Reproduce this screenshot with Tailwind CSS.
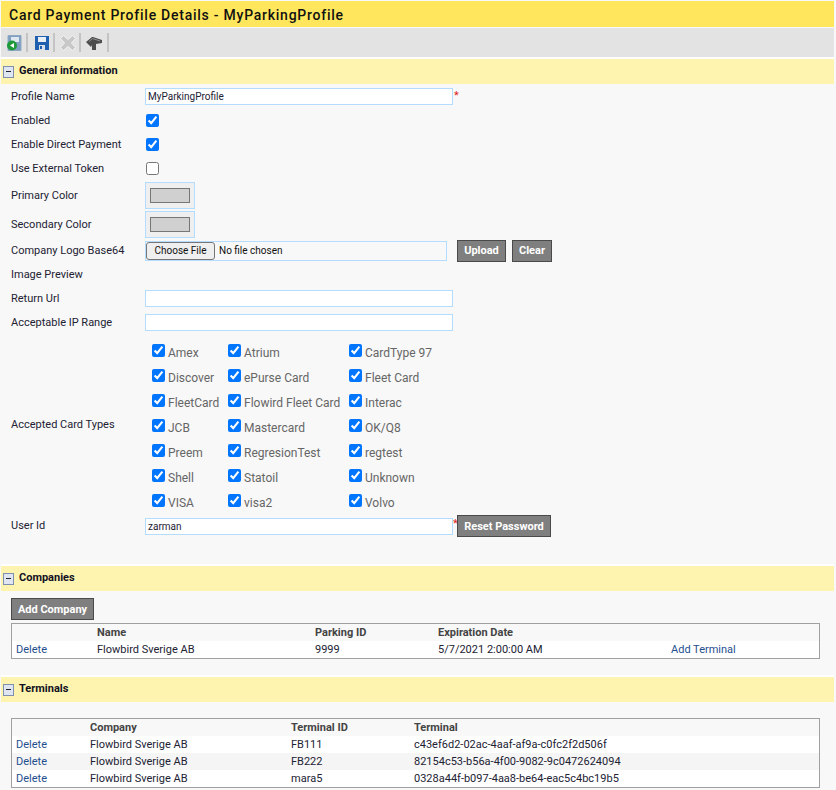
<!DOCTYPE html>
<html lang="en">
<head>
  <meta charset="UTF-8">
  <title>Card Payment Profile Details</title>
  <script src="https://cdn.jsdelivr.net/npm/@tailwindcss/browser@4"></script>
</head>
<body class="w-[836px] h-[790px] overflow-hidden bg-[#f8f8f8] font-['Roboto',sans-serif] text-[11px] text-[#222233]">
  <!-- Title -->
  <div class="ml-px mr-[2px] mt-px h-[26px] flex items-center pl-2 pt-0.5 bg-[#ffe65c] text-[14px] font-medium tracking-[0.75px] text-[#111]">Card Payment Profile Details - MyParkingProfile</div>

  <!-- Toolbar -->
  <div class="ml-px mr-[2px] mt-px h-[29px] flex items-center pl-[5px] bg-[#e3e3e3]">
    <svg class="w-4 h-4" viewBox="0 0 16 16"><path d="M2 0.500h13v15H2z" fill="#7f9fc0" stroke="#8fa8c4"/><path d="M5 2h8v5H5z" fill="#dfe8f0"/><circle cx="6" cy="10.500" r="5" fill="#1f9a3a"/><path d="M8 8v5L4 10.500z" fill="#fff"/></svg>
    <div class="ml-1 mr-[6px] w-0.5 h-[19px] bg-[#c4c4c4]"></div>
    <svg class="w-4 h-4" viewBox="0 0 16 16"><path d="M1 1h14v14H1z" fill="#1f5fb0"/><path d="M4 2h8v5H4z" fill="#e8eef5"/><path d="M5 10h6v5H5z" fill="#d8e0ea"/><path d="M6 11h2v3H6z" fill="#1f5fb0"/></svg>
    <div class="ml-[3px] mr-[5px] w-0.5 h-[19px] bg-[#c4c4c4]"></div>
    <svg class="w-4 h-4" viewBox="0 0 16 16"><path d="M0.500 3.500 3.500 0.500 8 4.500l4.500-4 3 3L11.500 8l4 4.500-3 3L8 11.500l-4.500 4-3-3L4.500 8z" fill="#c8c8c8" stroke="#f2f2f2"/></svg>
    <div class="ml-[3px] mr-[5px] w-0.5 h-[19px] bg-[#c4c4c4]"></div>
    <svg class="w-4 h-4" viewBox="0 0 16 16"><path d="M0 7 6 2l1 0 9 3v3l-6 1v6H6V10L5 12z" fill="#4d4d4d"/><path d="M3 6.500 6.500 3.500 14 6" fill="none" stroke="#8f8f8f"/></svg>
    <div class="ml-[5px] w-0.5 h-[19px] bg-[#c4c4c4]"></div>
  </div>

  <!-- General information -->
  <div class="ml-px mr-[2px] border-t-2 border-white h-[27px] flex items-center bg-[#fff3b0] font-bold text-[#111122]">
    <span class="ml-[2px] mr-[5px] w-[11px] h-3 flex items-center justify-center border border-[#7f8fb0] bg-[#dfe6f2]"><span class="w-[5px] h-px bg-[#223]"></span></span>
    General information
  </div>

  <div class="pl-[11px]">
    <div class="h-6 flex items-center">
      <label class="w-[134px] pt-0.5">Profile Name</label>
      <input class="w-[308px] h-[17px] px-0.5 border border-[#b3dcff] bg-white text-[10px]" value="MyParkingProfile">
      <span class="ml-px self-start mt-[4px] text-[#e02020]">*</span>
    </div>
    <div class="h-6 flex items-center">
      <label class="w-[134px] pt-0.5">Enabled</label>
      <input type="checkbox" checked class="ml-px w-[13px] h-[13px]">
    </div>
    <div class="h-6 flex items-center">
      <label class="w-[134px] pt-0.5">Enable Direct Payment</label>
      <input type="checkbox" checked class="ml-px w-[13px] h-[13px]">
    </div>
    <div class="h-6 flex items-center">
      <label class="w-[134px] pt-0.5">Use External Token</label>
      <input type="checkbox" class="ml-px w-[13px] h-[13px]">
    </div>
    <div class="mt-px h-[29px] flex items-center">
      <label class="w-[134px] pt-0.5">Primary Color</label>
      <div class="w-[50px] h-[27px] flex items-center justify-center border border-[#b3dcff] bg-[#efefef]"><div class="w-10 h-[15px] border border-[#767676] bg-[#d0d0d0]"></div></div>
    </div>
    <div class="h-[29px] flex items-center">
      <label class="w-[134px] pt-0.5">Secondary Color</label>
      <div class="w-[50px] h-[27px] flex items-center justify-center border border-[#b3dcff] bg-[#efefef]"><div class="w-10 h-[15px] border border-[#767676] bg-[#d0d0d0]"></div></div>
    </div>
    <div class="h-[23px] flex items-center">
      <label class="w-[134px] pt-0.5">Company Logo Base64</label>
      <div class="w-[302px] h-5 flex items-center border border-[#b3dcff] text-[10px]">
        <button class="w-[69px] h-[18px] rounded-[3px] border border-[#767676] bg-[#efefef] text-[#111]">Choose File</button>
        <span class="ml-1 text-[#111]">No file chosen</span>
      </div>
      <button class="ml-[10px] w-[49px] h-[22px] pt-0.5 border border-[#4a4a4a] bg-[#7f7f7f] font-bold text-white">Upload</button>
      <button class="ml-1.5 w-10 h-[22px] pt-0.5 border border-[#4a4a4a] bg-[#7f7f7f] font-bold text-white">Clear</button>
    </div>
    <div class="h-6 flex items-center">
      <label class="w-[134px] pt-0.5">Image Preview</label>
    </div>
    <div class="h-6 flex items-center">
      <label class="w-[134px] pt-0.5">Return Url</label>
      <input class="w-[308px] h-[17px] border border-[#b3dcff] bg-white">
    </div>
    <div class="h-6 flex items-center">
      <label class="w-[134px] pt-0.5">Acceptable IP Range</label>
      <input class="w-[308px] h-[17px] border border-[#b3dcff] bg-white">
    </div>
    <div class="mt-1.5 h-[175px] flex">
      <label class="w-[134px] pt-[77px]">Accepted Card Types</label>
      <div class="ml-[7px] grid grid-cols-[76px_121px_100px] auto-rows-[25px] items-center text-[12px] text-[#666]">
        <label class="flex items-center gap-[3px]"><input type="checkbox" checked class="w-[13px] h-[13px] mb-[5px]">Amex</label>
        <label class="flex items-center gap-[3px]"><input type="checkbox" checked class="w-[13px] h-[13px] mb-[5px]">Atrium</label>
        <label class="flex items-center gap-[3px]"><input type="checkbox" checked class="w-[13px] h-[13px] mb-[5px]">CardType 97</label>
        <label class="flex items-center gap-[3px]"><input type="checkbox" checked class="w-[13px] h-[13px] mb-[5px]">Discover</label>
        <label class="flex items-center gap-[3px]"><input type="checkbox" checked class="w-[13px] h-[13px] mb-[5px]">ePurse Card</label>
        <label class="flex items-center gap-[3px]"><input type="checkbox" checked class="w-[13px] h-[13px] mb-[5px]">Fleet Card</label>
        <label class="flex items-center gap-[3px]"><input type="checkbox" checked class="w-[13px] h-[13px] mb-[5px]">FleetCard</label>
        <label class="flex items-center gap-[3px]"><input type="checkbox" checked class="w-[13px] h-[13px] mb-[5px]">Flowird Fleet Card</label>
        <label class="flex items-center gap-[3px]"><input type="checkbox" checked class="w-[13px] h-[13px] mb-[5px]">Interac</label>
        <label class="flex items-center gap-[3px]"><input type="checkbox" checked class="w-[13px] h-[13px] mb-[5px]">JCB</label>
        <label class="flex items-center gap-[3px]"><input type="checkbox" checked class="w-[13px] h-[13px] mb-[5px]">Mastercard</label>
        <label class="flex items-center gap-[3px]"><input type="checkbox" checked class="w-[13px] h-[13px] mb-[5px]">OK/Q8</label>
        <label class="flex items-center gap-[3px]"><input type="checkbox" checked class="w-[13px] h-[13px] mb-[5px]">Preem</label>
        <label class="flex items-center gap-[3px]"><input type="checkbox" checked class="w-[13px] h-[13px] mb-[5px]">RegresionTest</label>
        <label class="flex items-center gap-[3px]"><input type="checkbox" checked class="w-[13px] h-[13px] mb-[5px]">regtest</label>
        <label class="flex items-center gap-[3px]"><input type="checkbox" checked class="w-[13px] h-[13px] mb-[5px]">Shell</label>
        <label class="flex items-center gap-[3px]"><input type="checkbox" checked class="w-[13px] h-[13px] mb-[5px]">Statoil</label>
        <label class="flex items-center gap-[3px]"><input type="checkbox" checked class="w-[13px] h-[13px] mb-[5px]">Unknown</label>
        <label class="flex items-center gap-[3px]"><input type="checkbox" checked class="w-[13px] h-[13px] mb-[5px]">VISA</label>
        <label class="flex items-center gap-[3px]"><input type="checkbox" checked class="w-[13px] h-[13px] mb-[5px]">visa2</label>
        <label class="flex items-center gap-[3px]"><input type="checkbox" checked class="w-[13px] h-[13px] mb-[5px]">Volvo</label>
      </div>
    </div>
    <div class="h-[22px] flex items-center">
      <label class="w-[134px]">User Id</label>
      <input class="w-[308px] h-[17px] px-0.5 border border-[#b3dcff] bg-white text-[10px]" value="zarman">
      <span class="w-1 self-start mt-px text-[#e02020]">*</span>
      <button class="w-[94px] h-[22px] pt-0.5 border border-[#4a4a4a] bg-[#7f7f7f] font-bold text-white">Reset Password</button>
    </div>
  </div>

  <!-- Companies -->
  <div class="mt-[27px] ml-px mr-[2px] border-t-2 border-white h-[27px] flex items-center bg-[#fff3b0] font-bold text-[#111122]">
    <span class="ml-[2px] mr-[5px] w-[11px] h-3 flex items-center justify-center border border-[#7f8fb0] bg-[#dfe6f2]"><span class="w-[5px] h-px bg-[#223]"></span></span>
    Companies
  </div>
  <div class="pl-[11px] pt-[7px]">
    <button class="w-[83px] h-[22px] pt-0.5 border border-[#4a4a4a] bg-[#7f7f7f] font-bold text-white">Add Company</button>
    <div class="mt-[3px] w-[809px] border border-[#a0a0a0]">
      <div class="h-[17px] pl-1 pt-px grid grid-cols-[81px_218px_123px_233px_1fr] items-center font-bold text-[#444]">
        <span></span><span>Name</span><span>Parking ID</span><span>Expiration Date</span><span></span>
      </div>
      <div class="h-[17px] pl-1 pt-px grid grid-cols-[81px_218px_123px_233px_1fr] items-center bg-white text-[#222233]">
        <a class="text-[#1f4f8f]">Delete</a><span>Flowbird Sverige AB</span><span>9999</span><span>5/7/2021 2:00:00 AM</span><a class="text-[#1f4f8f]">Add Terminal</a>
      </div>
    </div>
  </div>

  <!-- Terminals -->
  <div class="mt-4 ml-px mr-[2px] border-t-2 border-white h-[27px] flex items-center bg-[#fff3b0] font-bold text-[#111122]">
    <span class="ml-[2px] mr-[5px] w-[11px] h-3 flex items-center justify-center border border-[#7f8fb0] bg-[#dfe6f2]"><span class="w-[5px] h-px bg-[#223]"></span></span>
    Terminals
  </div>
  <div class="pl-[11px] pt-4">
    <div class="w-[809px] border border-[#a0a0a0]">
      <div class="h-[17px] pl-1 pt-px grid grid-cols-[74px_201px_123px_1fr] items-center font-bold text-[#444]">
        <span></span><span>Company</span><span>Terminal ID</span><span>Terminal</span>
      </div>
      <div class="h-[17px] pl-1 pt-px grid grid-cols-[74px_201px_123px_1fr] items-center bg-white">
        <a class="text-[#1f4f8f]">Delete</a><span>Flowbird Sverige AB</span><span>FB111</span><span>c43ef6d2-02ac-4aaf-af9a-c0fc2f2d506f</span>
      </div>
      <div class="h-[17px] pl-1 pt-px grid grid-cols-[74px_201px_123px_1fr] items-center bg-[#f5f5f5]">
        <a class="text-[#1f4f8f]">Delete</a><span>Flowbird Sverige AB</span><span>FB222</span><span>82154c53-b56a-4f00-9082-9c0472624094</span>
      </div>
      <div class="h-[17px] pl-1 pt-px grid grid-cols-[74px_201px_123px_1fr] items-center bg-white">
        <a class="text-[#1f4f8f]">Delete</a><span>Flowbird Sverige AB</span><span>mara5</span><span>0328a44f-b097-4aa8-be64-eac5c4bc19b5</span>
      </div>
    </div>
  </div>
</body>
</html>
